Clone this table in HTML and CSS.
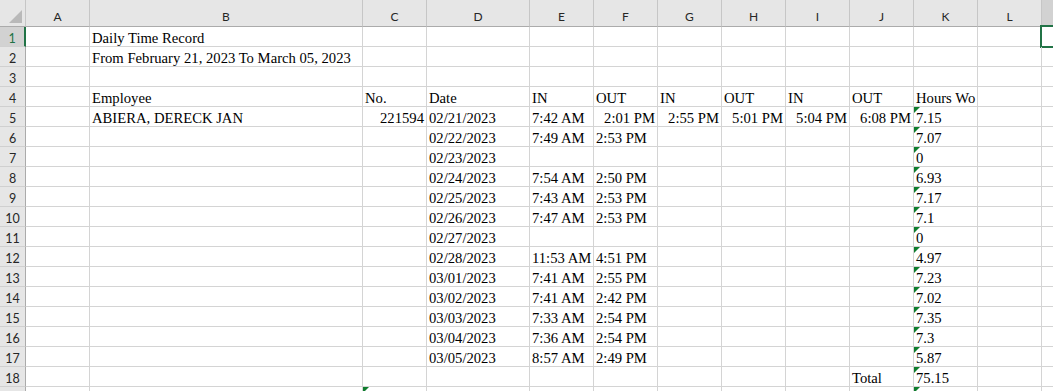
FILE: index.html
```html
<!DOCTYPE html>
<html lang="en">
<head>
<meta charset="utf-8">
<title>Daily Time Record</title>
<link rel="stylesheet" href="styles.css">
</head>
<body>
<div class="sheet">
  <div class="row head">
    <div class="corner"></div>
    <div class="ch">A</div><div class="ch">B</div><div class="ch">C</div><div class="ch">D</div>
    <div class="ch">E</div><div class="ch">F</div><div class="ch">G</div><div class="ch">H</div>
    <div class="ch">I</div><div class="ch">J</div><div class="ch">K</div><div class="ch">L</div>
    <div class="ch sel"></div>
  </div>

  <div class="row">
    <div class="rh sel">1</div>
    <div class="c"></div><div class="c">Daily Time Record</div><div class="c"></div><div class="c"></div>
    <div class="c"></div><div class="c"></div><div class="c"></div><div class="c"></div>
    <div class="c"></div><div class="c"></div><div class="c"></div><div class="c"></div>
    <div class="c active"></div>
  </div>

  <div class="row">
    <div class="rh">2</div>
    <div class="c"></div><div class="c">From February 21, 2023 To March 05, 2023</div><div class="c"></div><div class="c"></div>
    <div class="c"></div><div class="c"></div><div class="c"></div><div class="c"></div>
    <div class="c"></div><div class="c"></div><div class="c"></div><div class="c"></div>
    <div class="c"></div>
  </div>

  <div class="row">
    <div class="rh">3</div>
    <div class="c"></div><div class="c"></div><div class="c"></div><div class="c"></div>
    <div class="c"></div><div class="c"></div><div class="c"></div><div class="c"></div>
    <div class="c"></div><div class="c"></div><div class="c"></div><div class="c"></div>
    <div class="c"></div>
  </div>

  <div class="row">
    <div class="rh">4</div>
    <div class="c"></div><div class="c">Employee</div><div class="c">No.</div><div class="c">Date</div>
    <div class="c">IN</div><div class="c">OUT</div><div class="c">IN</div><div class="c">OUT</div>
    <div class="c">IN</div><div class="c">OUT</div><div class="c clip">Hours Wo</div><div class="c"></div>
    <div class="c"></div>
  </div>

  <div class="row">
    <div class="rh">5</div>
    <div class="c"></div><div class="c">ABIERA, DERECK JAN</div><div class="c num">221594</div><div class="c">02/21/2023</div>
    <div class="c">7:42 AM</div><div class="c num">2:01 PM</div><div class="c num">2:55 PM</div><div class="c num">5:01 PM</div>
    <div class="c num">5:04 PM</div><div class="c num">6:08 PM</div><div class="c flag">7.15</div><div class="c"></div>
    <div class="c"></div>
  </div>

  <div class="row">
    <div class="rh">6</div>
    <div class="c"></div><div class="c"></div><div class="c"></div><div class="c">02/22/2023</div>
    <div class="c">7:49 AM</div><div class="c">2:53 PM</div><div class="c"></div><div class="c"></div>
    <div class="c"></div><div class="c"></div><div class="c flag">7.07</div><div class="c"></div>
    <div class="c"></div>
  </div>

  <div class="row">
    <div class="rh">7</div>
    <div class="c"></div><div class="c"></div><div class="c"></div><div class="c">02/23/2023</div>
    <div class="c"></div><div class="c"></div><div class="c"></div><div class="c"></div>
    <div class="c"></div><div class="c"></div><div class="c flag">0</div><div class="c"></div>
    <div class="c"></div>
  </div>

  <div class="row">
    <div class="rh">8</div>
    <div class="c"></div><div class="c"></div><div class="c"></div><div class="c">02/24/2023</div>
    <div class="c">7:54 AM</div><div class="c">2:50 PM</div><div class="c"></div><div class="c"></div>
    <div class="c"></div><div class="c"></div><div class="c flag">6.93</div><div class="c"></div>
    <div class="c"></div>
  </div>

  <div class="row">
    <div class="rh">9</div>
    <div class="c"></div><div class="c"></div><div class="c"></div><div class="c">02/25/2023</div>
    <div class="c">7:43 AM</div><div class="c">2:53 PM</div><div class="c"></div><div class="c"></div>
    <div class="c"></div><div class="c"></div><div class="c flag">7.17</div><div class="c"></div>
    <div class="c"></div>
  </div>

  <div class="row">
    <div class="rh">10</div>
    <div class="c"></div><div class="c"></div><div class="c"></div><div class="c">02/26/2023</div>
    <div class="c">7:47 AM</div><div class="c">2:53 PM</div><div class="c"></div><div class="c"></div>
    <div class="c"></div><div class="c"></div><div class="c flag">7.1</div><div class="c"></div>
    <div class="c"></div>
  </div>

  <div class="row">
    <div class="rh">11</div>
    <div class="c"></div><div class="c"></div><div class="c"></div><div class="c">02/27/2023</div>
    <div class="c"></div><div class="c"></div><div class="c"></div><div class="c"></div>
    <div class="c"></div><div class="c"></div><div class="c flag">0</div><div class="c"></div>
    <div class="c"></div>
  </div>

  <div class="row">
    <div class="rh">12</div>
    <div class="c"></div><div class="c"></div><div class="c"></div><div class="c">02/28/2023</div>
    <div class="c">11:53 AM</div><div class="c">4:51 PM</div><div class="c"></div><div class="c"></div>
    <div class="c"></div><div class="c"></div><div class="c flag">4.97</div><div class="c"></div>
    <div class="c"></div>
  </div>

  <div class="row">
    <div class="rh">13</div>
    <div class="c"></div><div class="c"></div><div class="c"></div><div class="c">03/01/2023</div>
    <div class="c">7:41 AM</div><div class="c">2:55 PM</div><div class="c"></div><div class="c"></div>
    <div class="c"></div><div class="c"></div><div class="c flag">7.23</div><div class="c"></div>
    <div class="c"></div>
  </div>

  <div class="row">
    <div class="rh">14</div>
    <div class="c"></div><div class="c"></div><div class="c"></div><div class="c">03/02/2023</div>
    <div class="c">7:41 AM</div><div class="c">2:42 PM</div><div class="c"></div><div class="c"></div>
    <div class="c"></div><div class="c"></div><div class="c flag">7.02</div><div class="c"></div>
    <div class="c"></div>
  </div>

  <div class="row">
    <div class="rh">15</div>
    <div class="c"></div><div class="c"></div><div class="c"></div><div class="c">03/03/2023</div>
    <div class="c">7:33 AM</div><div class="c">2:54 PM</div><div class="c"></div><div class="c"></div>
    <div class="c"></div><div class="c"></div><div class="c flag">7.35</div><div class="c"></div>
    <div class="c"></div>
  </div>

  <div class="row">
    <div class="rh">16</div>
    <div class="c"></div><div class="c"></div><div class="c"></div><div class="c">03/04/2023</div>
    <div class="c">7:36 AM</div><div class="c">2:54 PM</div><div class="c"></div><div class="c"></div>
    <div class="c"></div><div class="c"></div><div class="c flag">7.3</div><div class="c"></div>
    <div class="c"></div>
  </div>

  <div class="row">
    <div class="rh">17</div>
    <div class="c"></div><div class="c"></div><div class="c"></div><div class="c">03/05/2023</div>
    <div class="c">8:57 AM</div><div class="c">2:49 PM</div><div class="c"></div><div class="c"></div>
    <div class="c"></div><div class="c"></div><div class="c flag">5.87</div><div class="c"></div>
    <div class="c"></div>
  </div>

  <div class="row">
    <div class="rh">18</div>
    <div class="c"></div><div class="c"></div><div class="c"></div><div class="c"></div>
    <div class="c"></div><div class="c"></div><div class="c"></div><div class="c"></div>
    <div class="c"></div><div class="c">Total</div><div class="c flag">75.15</div><div class="c"></div>
    <div class="c"></div>
  </div>

  <div class="row">
    <div class="rh"></div>
    <div class="c"></div><div class="c"></div><div class="c flag"></div><div class="c"></div>
    <div class="c"></div><div class="c"></div><div class="c"></div><div class="c"></div>
    <div class="c"></div><div class="c"></div><div class="c flag"></div><div class="c"></div>
    <div class="c"></div>
  </div>
</div>
</body>
</html>
```

FILE: styles.css
```css
html, body {
  margin: 0;
  padding: 0;
  background: #ffffff;
  overflow: hidden;
}

.sheet {
  --cols: 26px 64px 273px 64px 103px 64px 64px 64px 64px 64px 64px 64px 64px 200px;
  width: 1053px;
  height: 391px;
  overflow: hidden;
}

.row {
  display: grid;
  grid-template-columns: var(--cols);
  height: 20px;
}

.row.head {
  height: 27px;
}

/* column letters */
.ch {
  box-sizing: border-box;
  background: #e6e6e6;
  border-right: 1px solid #c6c6c6;
  border-bottom: 1px solid #ababab;
  font-family: Lato, "Open Sans", sans-serif;
  font-size: 12px;
  color: #262626;
  display: flex;
  align-items: center;
  justify-content: center;
  padding-top: 7px;
}

.ch.sel {
  background: #d2d2d2;
}

.corner {
  box-sizing: border-box;
  background: #e6e6e6;
  border-right: 1px solid #c6c6c6;
  border-bottom: 1px solid #ababab;
  position: relative;
}

.corner::after {
  content: "";
  position: absolute;
  right: 3px;
  bottom: 3px;
  width: 0;
  height: 0;
  border-left: 13px solid transparent;
  border-bottom: 13px solid #b9b9b9;
}

/* row numbers */
.rh {
  box-sizing: border-box;
  background: #e6e6e6;
  border-right: 1px solid #ababab;
  border-bottom: 1px solid #d0d0d0;
  font-family: Lato, "Open Sans", sans-serif;
  font-size: 12.5px;
  color: #262626;
  display: flex;
  align-items: center;
  justify-content: center;
  padding-top: 4px;
}

.rh.sel {
  background: #d2d2d2;
  color: #217346;
  border-right: 2px solid #217346;
}

/* cells */
.c {
  box-sizing: border-box;
  border-right: 1px solid #d4d4d4;
  border-bottom: 1px solid #d4d4d4;
  font-family: "Liberation Serif", "Times New Roman", serif;
  font-size: 14.67px;
  line-height: 15px;
  color: #000000;
  white-space: nowrap;
  padding: 0 2px 0 2px;
  display: flex;
  align-items: flex-end;
  position: relative;
}

.c.num {
  justify-content: flex-end;
}

.c.clip {
  overflow: hidden;
}

/* number-stored-as-text marker */
.c.flag::before {
  content: "";
  position: absolute;
  left: 0;
  top: 0;
  width: 0;
  height: 0;
  border-top: 6px solid #0f7d2e;
  border-right: 6px solid transparent;
}

/* active cell outline */
.c.active::after {
  content: "";
  position: absolute;
  left: -2px;
  top: -2px;
  right: -2px;
  bottom: -2px;
  border: 2px solid #217346;
}
```
